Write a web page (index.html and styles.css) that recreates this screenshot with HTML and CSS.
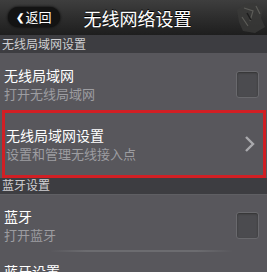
FILE: index.html
```html
<!DOCTYPE html>
<html>
<head>
<meta charset="utf-8">
<link rel="stylesheet" href="styles.css">
</head>
<body>
<div class="screen">
  <header class="topbar">
    <div class="back"><span class="chev">&#10094;</span>返回</div>
    <div class="title">无线网络设置</div>
    <svg class="deco" width="38" height="35" viewBox="0 0 38 35"><path d="M8 10 L16 4 L26 3 L34 9 L32 18 L36 27 L26 33 L14 31 L10 22 Z" fill="#3a3a38" opacity="0.8"/><path d="M15 8 L24 11 L21 21 M13 17 L19 26 M27 6 L31 14" fill="none" stroke="#5c5c58" stroke-width="1.2"/><path d="M18 13 L22 20" fill="none" stroke="#1c1c1c" stroke-width="1.5"/></svg>
  </header>
  <div class="section">无线局域网设置</div>
  <div class="row first">
    <div class="texts">
      <div class="rtitle">无线局域网</div>
      <div class="rsub">打开无线局域网</div>
    </div>
    <div class="check"></div>
  </div>
  <div class="row hl">
    <div class="texts">
      <div class="rtitle">无线局域网设置</div>
      <div class="rsub">设置和管理无线接入点</div>
    </div>
    <svg class="arrow" width="12" height="18" viewBox="0 0 12 18"><path d="M3 2 L10 9 L3 16" fill="none" stroke="#a9a9ad" stroke-width="2.4"/></svg>
  </div>
  <div class="section s2">蓝牙设置</div>
  <div class="row bt">
    <div class="texts">
      <div class="rtitle">蓝牙</div>
      <div class="rsub">打开蓝牙</div>
    </div>
    <div class="check"></div>
  </div>
  <div class="row last">
    <div class="texts">
      <div class="rtitle">蓝牙设置</div>
    </div>
  </div>
</div>
</body>
</html>
```
FILE: styles.css
```css
html, body { margin: 0; padding: 0; }
body { background: #58575c; font-family: "Noto Sans CJK SC", "Noto Sans", sans-serif; }
.screen { width: 267px; height: 272px; overflow: hidden; background: #58575c; }
.topbar { position: relative; height: 35px; display: flex; align-items: center; justify-content: center; background: linear-gradient(#3e3e3e, #2c2c2c 55%, #1e1e1e); }
.back { position: absolute; left: 8px; top: 7px; height: 20px; width: 52px; border-radius: 10px; background: #131313; box-shadow: 0 0 3px #000; color: #fff; font-size: 13px; line-height: 20px; display: flex; align-items: center; justify-content: center; gap: 1px; }
.chev { font-size: 10px; font-weight: bold; }
.title { color: #fff; font-size: 18px; margin-left: 8px; text-shadow: 0 -1px 0 #000; }
.deco { position: absolute; right: 0; top: 0; }
.section { height: 18px; line-height: 18px; background: #3d3d41; color: #cfcfd2; font-size: 12px; padding-left: 2px; box-sizing: border-box; }
.section.s2 { height: 17px; line-height: 14px; border-bottom: 1px solid #5f5f63; }
.row { height: 57px; display: flex; align-items: center; padding: 0 8px 0 4px; box-sizing: border-box; }
.row.first { padding-top: 5px; }
.row.hl { margin: 0 1px 0 2px; height: 68px; border: 3px solid #d11f24; padding: 0 6px 0 1px; }
.row.bt { position: relative; padding-top: 4px; }
.row.bt::after { content: ""; position: absolute; left: 50px; right: 34px; bottom: 0; height: 2px; background: linear-gradient(90deg, rgba(110,110,114,0), #6c6c70 20%, #6c6c70 80%, rgba(110,110,114,0)); }
.row.last { align-items: flex-start; padding-top: 10px; }
.texts { flex: 1; }
.rtitle { color: #fff; font-size: 14px; line-height: 19px; }
.rsub { color: #9d9da1; font-size: 13px; line-height: 18px; }
.check { width: 21px; height: 25px; border-radius: 3px; background: #4b4b4f; border: 1px solid #69696d; box-shadow: inset 0 1px 2px #333; }
.arrow { margin-right: 2px; }
```
